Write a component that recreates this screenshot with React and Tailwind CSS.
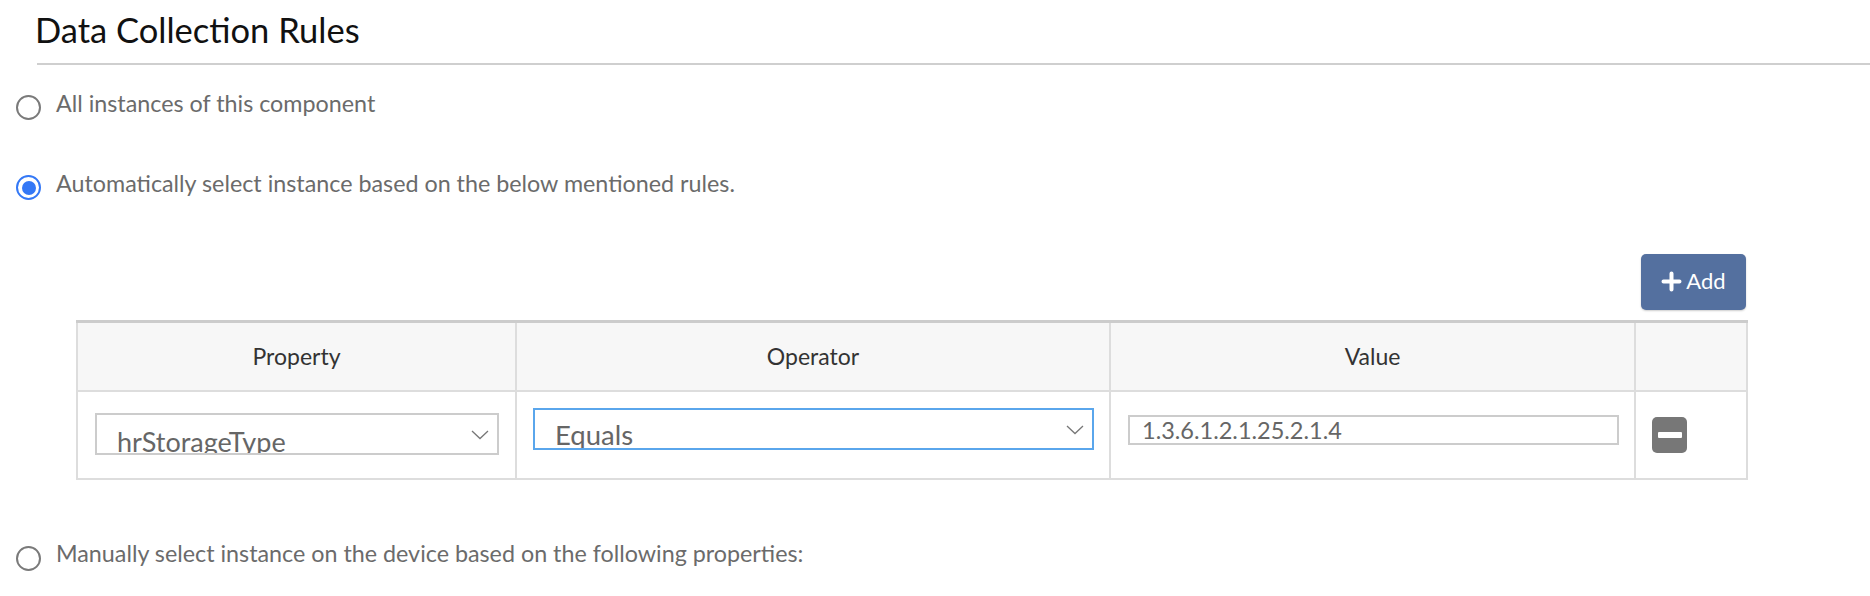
import React from "react";

function Radio({ checked }) {
  if (checked) {
    return (
      <span className="w-[25px] h-[25px] rounded-full border-[2.5px] border-[#3478f6] flex items-center justify-center shrink-0 bg-white">
        <span className="w-[14px] h-[14px] rounded-full bg-[#3478f6]" />
      </span>
    );
  }
  return <span className="w-[25px] h-[25px] rounded-full border-2 border-[#7a7a7a] shrink-0 bg-white" />;
}

function Chevron() {
  return (
    <svg width="18" height="10" viewBox="0 0 18 10" className="shrink-0">
      <path d="M1 1 L9 8.5 L17 1" fill="none" stroke="#777" strokeWidth="1.3" />
    </svg>
  );
}

export default function App() {
  return (
    <div className="w-[1870px] h-[596px] bg-white overflow-hidden font-['Lato',sans-serif]">
      <div className="pl-[16px]">
        <h1 className="ml-[19px] pt-[13px] text-[34.5px] leading-none text-[#111] font-normal">
          Data Collection Rules
        </h1>
        <div className="ml-[21px] mt-[15px] h-[2px] bg-[#cfcfcf]" />

        <label className="mt-[31px] flex items-center gap-[15px] h-[24px]">
          <Radio />
          <span className="text-[23.3px] leading-none text-[#6b6b6b] mb-[8px]">
            All instances of this component
          </span>
        </label>

        <label className="mt-[56px] flex items-center gap-[15px] h-[24px]">
          <Radio checked />
          <span className="text-[23.3px] leading-none text-[#6b6b6b] mb-[8px]">
            Automatically select instance based on the below mentioned rules.
          </span>
        </label>

        <div className="ml-[60px] w-[1670px] mt-[54px]">
          <div className="flex justify-end">
            <button className="w-[105px] h-[56px] rounded-[5px] bg-[#54709f] text-white flex items-center justify-center gap-[4px] shadow-[0_1px_2px_rgba(0,0,0,0.2)]">
              <svg width="21" height="21" viewBox="0 0 21 21">
                <path d="M10.5 2.5 V18.5 M2.5 10.5 H18.5" stroke="#fff" strokeWidth="4" strokeLinecap="round" />
              </svg>
              <span className="text-[22px] leading-none mb-[2px]">Add</span>
            </button>
          </div>

          <table className="mt-[10px] w-[1670px] table-fixed border-collapse">
            <colgroup>
              <col className="w-[439px]" />
              <col className="w-[594px]" />
              <col className="w-[525px]" />
              <col className="w-[112px]" />
            </colgroup>
            <thead>
              <tr className="h-[70px]">
                <th className="bg-[#f7f7f7] border-2 border-[#dddddd] border-t-[3px] border-t-[#cccccc] text-[23px] font-normal text-[#333] text-center align-middle">
                  Property
                </th>
                <th className="bg-[#f7f7f7] border-2 border-[#dddddd] border-t-[3px] border-t-[#cccccc] text-[23px] font-normal text-[#333] text-center align-middle">
                  Operator
                </th>
                <th className="bg-[#f7f7f7] border-2 border-[#dddddd] border-t-[3px] border-t-[#cccccc] text-[23px] font-normal text-[#333] text-center align-middle">
                  Value
                </th>
                <th className="bg-[#f7f7f7] border-2 border-[#dddddd] border-t-[3px] border-t-[#cccccc]" />
              </tr>
            </thead>
            <tbody>
              <tr className="h-[88px]">
                <td className="border-2 border-[#dddddd] align-top pt-[21px] pl-[17px] pr-[16px]">
                  <div className="h-[42px] border-2 border-[#cccccc] overflow-hidden flex items-start justify-between pl-[20px] pr-[8px]">
                    <span className="pt-[13px] text-[27px] leading-none text-[#666]">hrStorageType</span>
                    <span className="pt-[15px]"><Chevron /></span>
                  </div>
                </td>
                <td className="border-2 border-[#dddddd] align-top pt-[16px] pl-[16px] pr-[15px]">
                  <div className="h-[42px] border-2 border-[#5aa6ec] overflow-hidden flex items-start justify-between pl-[20px] pr-[8px]">
                    <span className="pt-[11px] text-[27.5px] leading-none text-[#666]">Equals</span>
                    <span className="pt-[15px]"><Chevron /></span>
                  </div>
                </td>
                <td className="border-2 border-[#dddddd] align-top pt-[23px] pl-[17px] pr-[15px]">
                  <div className="h-[30px] border-2 border-[#cccccc] overflow-hidden pl-[12px]">
                    <span className="block pt-[2px] text-[23.5px] leading-none text-[#666]">1.3.6.1.2.1.25.2.1.4</span>
                  </div>
                </td>
                <td className="border-2 border-[#dddddd] align-top pt-[25px] pl-[16px]">
                  <div className="w-[35px] h-[36px] rounded-[5px] bg-[#777] flex items-center justify-center">
                    <span className="w-[24px] h-[6px] rounded-[1px] bg-white" />
                  </div>
                </td>
              </tr>
            </tbody>
          </table>
        </div>

        <label className="mt-[66px] flex items-center gap-[15px] h-[24px]">
          <Radio />
          <span className="text-[23.3px] leading-none text-[#6b6b6b] mb-[8px]">
            Manually select instance on the device based on the following properties:
          </span>
        </label>
      </div>
    </div>
  );
}
